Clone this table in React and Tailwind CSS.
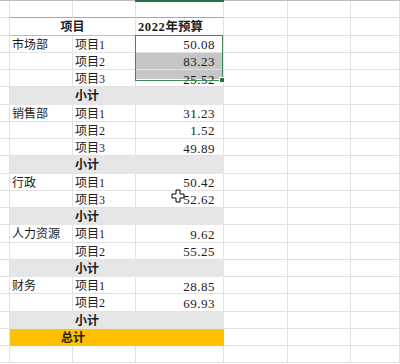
import React from "react";

const W = { z: "w-[10px]", a: "w-[63px]", b: "w-[63px]", c: "w-[88px]", d: "w-[64px]", e: "w-[63px]", f: "w-[49px]" };

const rows = [
  { t: "empty" },
  { t: "header" },
  { a: "市场部", b: "项目1", c: "50.08" },
  { b: "项目2", c: "83.23", sel: "full" },
  { b: "项目3", c: "25.52", sel: "part" },
  { t: "sub" },
  { a: "销售部", b: "项目1", c: "31.23" },
  { b: "项目2", c: "1.52" },
  { b: "项目3", c: "49.89" },
  { t: "sub" },
  { a: "行政", b: "项目1", c: "50.42" },
  { b: "项目3", c: "52.62" },
  { t: "sub" },
  { a: "人力资源", b: "项目1", c: "9.62" },
  { b: "项目2", c: "55.25" },
  { t: "sub" },
  { a: "财务", b: "项目1", c: "28.85" },
  { b: "项目2", c: "69.93" },
  { t: "sub" },
  { t: "total" },
  { t: "empty" },
];

const cell = "h-full shrink-0 border-r border-b border-[#e1e1e1] flex items-center pt-[2px]";

function Tail() {
  return (
    <>
      <div className={`${cell} ${W.d}`} />
      <div className={`${cell} ${W.e}`} />
      <div className={`${cell} ${W.f}`} />
    </>
  );
}

function Row({ r, i }) {
  if (r.t === "empty") {
    const dark = i === 0;
    return (
      <div className="flex h-[17.25px]">
        <div className={`${cell} ${W.z}`} />
        <div className={`${cell} ${W.a} ${dark ? "border-b-[#a8a8a8]" : ""}`} />
        <div className={`${cell} ${W.b} ${dark ? "border-b-[#a8a8a8]" : ""}`} />
        <div className={`${cell} ${W.c} ${dark ? "border-b-[#a8a8a8]" : ""}`} />
        <Tail />
      </div>
    );
  }
  if (r.t === "header") {
    return (
      <div className="flex h-[17.25px] font-bold">
        <div className={`${cell} ${W.z}`} />
        <div className={`${cell} w-[126px] justify-center border-b-[#bdbdbd]`}>项目</div>
        <div className={`${cell} ${W.c} pl-[2px] border-b-[#bdbdbd] text-[12.5px]`}>
          <span className="tracking-[0.6px]">2022</span>年预算
        </div>
        <Tail />
      </div>
    );
  }
  if (r.t === "sub") {
    return (
      <div className="flex h-[17.25px] font-bold">
        <div className={`${cell} ${W.z}`} />
        <div className={`${cell} w-[214px] bg-[#e6e6e6] border-[#e6e6e6] pl-[65px]`}>小计</div>
        <Tail />
      </div>
    );
  }
  if (r.t === "total") {
    return (
      <div className="flex h-[17.25px] font-bold">
        <div className={`${cell} ${W.z}`} />
        <div className={`${cell} w-[214px] bg-[#ffc000] border-[#ffc000]`}>
          <div className="w-[126px] text-center">总计</div>
        </div>
        <Tail />
      </div>
    );
  }
  const selBg =
    r.sel === "full"
      ? "bg-[#c6c6c6]"
      : r.sel === "part"
      ? "bg-[linear-gradient(to_bottom,#c6c6c6_0px,#c6c6c6_9px,#ffffff_9px)]"
      : "";
  return (
    <div className="flex h-[17.25px]">
      <div className={`${cell} ${W.z}`} />
      <div className={`${cell} ${W.a} pl-[2px] whitespace-nowrap`}>{r.a || ""}</div>
      <div className={`${cell} ${W.b} pl-[2px]`}>{r.b}</div>
      <div className={`${cell} ${W.c} justify-end pr-[8px] text-[13px] tracking-[0.5px] ${selBg}`}>{r.c}</div>
      <Tail />
    </div>
  );
}

export default function App() {
  return (
    <div
      className="relative w-[400px] h-[364px] overflow-hidden bg-white text-[12px] text-[#1c1c1c] leading-none"
      style={{ fontFamily: '"Liberation Serif", "Noto Sans CJK SC", serif' }}
    >
      <div className="relative h-[1px] bg-[#bdbdbd]">
        <div className="absolute left-[135px] top-0 w-[89px] h-[2px] bg-[#217346]" />
      </div>
      {rows.map((r, i) => (
        <Row key={i} r={r} i={i} />
      ))}
      {/* selection */}
      <div className="absolute left-[135px] top-[35px] w-[88px] h-[46px] border border-[#3e8a58]" />
      <div className="absolute left-[220px] top-[78px] w-[4px] h-[4px] bg-[#217346] outline outline-1 outline-white" />
      {/* cursor */}
      <svg className="absolute left-[171px] top-[189px]" width="14" height="14" viewBox="0 0 14 14">
        <path
          d="M5 1 H9 V5 H13 V9 H9 V13 H5 V9 H1 V5 H5 Z"
          fill="#ffffff"
          stroke="#000000"
          strokeWidth="1"
        />
      </svg>
    </div>
  );
}
